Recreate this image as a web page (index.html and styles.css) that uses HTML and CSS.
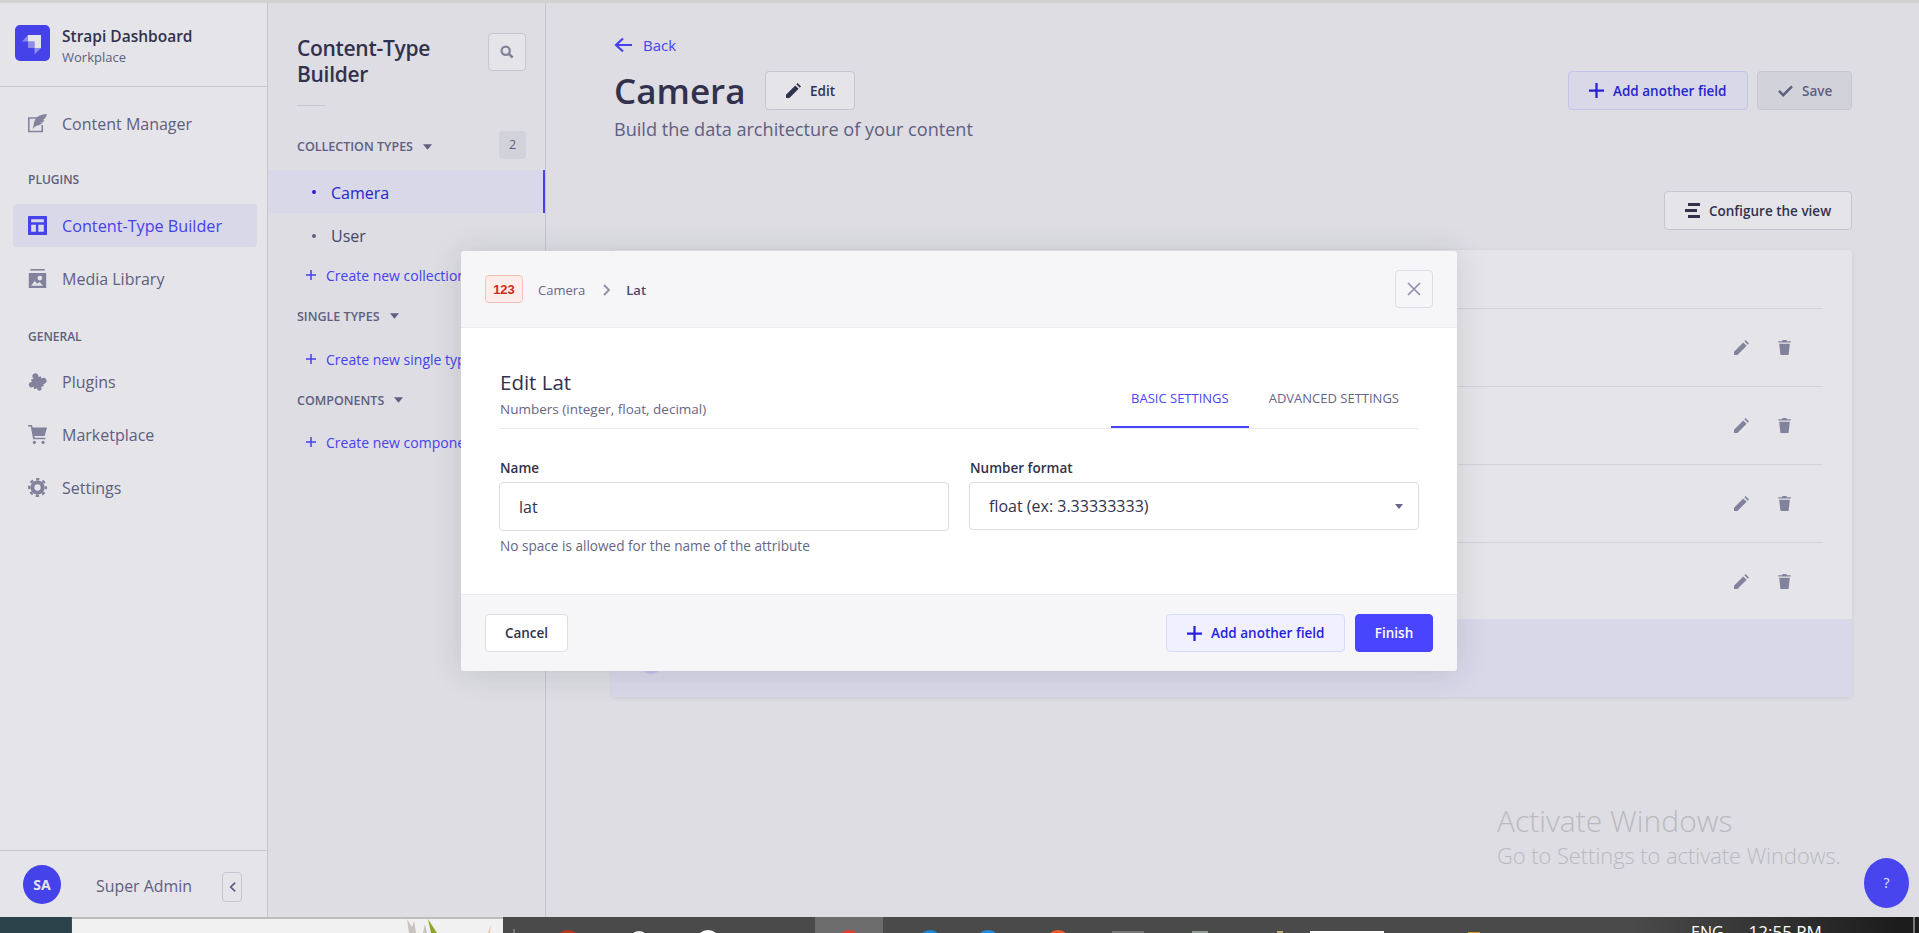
FILE: index.html
```html
<!DOCTYPE html>
<html lang="en">
<head>
    <meta charset="UTF-8">
    <title>Strapi Dashboard - Content-Type Builder</title>
    <link rel="stylesheet" href="styles.css">
</head>
<body>

<svg class="defs" width="0" height="0">
    <symbol id="i-pencil" viewBox="0 0 24 24"><path d="M0 24v-5.4L14.8 3.800l5.4 5.4L5.4 24zM16.600 2 18.600 0 24 5.400 22 7.400z"/></symbol>
    <symbol id="i-trash" viewBox="0 0 20 24"><path d="M7 0h6l1 2h6v2H0V2h6zM1.500 6h17L16.500 24h-13z"/></symbol>
    <symbol id="i-plus" viewBox="0 0 16 16"><path d="M6.800 0h2.400v6.800H16v2.400H9.200V16H6.800V9.200H0V6.800h6.800z"/></symbol>
    <symbol id="i-caret" viewBox="0 0 10 6"><path d="M0 0h10L5 6z"/></symbol>
</svg>

<div class="top-band"></div>

<div class="app">
    <aside class="sidebar">
        <div class="brand">
            <svg class="logo" viewBox="0 0 35 36">
                <rect width="35" height="36" rx="5" fill="#4945ff"/>
                <path d="M13 10h13v13h-6.500v-6.500H13z" fill="#fff"/>
                <path d="M13 16.500h6.500V23H13z" fill="#fff" opacity=".45"/>
                <path d="M13 10v6.500H7z M19.500 23H26l-6.500 6.500z" fill="#fff" opacity=".45"/>
            </svg>
            <div>
                <div class="brand-name">Strapi Dashboard</div>
                <div class="brand-sub">Workplace</div>
            </div>
        </div>
        <nav class="nav">
            <a class="nav-item">
                <svg class="nav-icon" viewBox="0 0 24 24"><path d="M0 4h12v2H2v15h15v-7h2v9H0z"/><path d="M24 0C15 .5 8.500 4 7.500 12L6 19c1.500-2 3-3.500 5.500-4.500 2.500 0 5-1 6.500-3h-3.500c2.500 0 5-1 6.500-3.500h-3.500C21 7 23 4 24 0z"/></svg>
                Content Manager
            </a>
            <div class="nav-label">PLUGINS</div>
            <a class="nav-item active">
                <svg class="nav-icon" viewBox="0 0 24 24"><path fill-rule="evenodd" d="M1 0h22a1 1 0 0 1 1 1v22a1 1 0 0 1-1 1H1a1 1 0 0 1-1-1V1a1 1 0 0 1 1-1zM4 4v4h16V4zM4 11v9h6v-9zM13 11v9h7v-9z"/></svg>
                Content-Type Builder
            </a>
            <a class="nav-item">
                <svg class="nav-icon" viewBox="0 0 24 24"><path d="M3 0h18v2H3z"/><path fill-rule="evenodd" d="M1 5h22v19H1zM15 8.500a3 3 0 1 0 0 6 3 3 0 0 0 0-6zM4 21h15l-4.500-4.500-3 2L8.500 15z"/></svg>
                Media Library
            </a>
            <div class="nav-label general">GENERAL</div>
            <a class="nav-item">
                <svg class="nav-icon" viewBox="0 0 24 24"><g transform="rotate(-18 12 12)"><rect x="5" y="7" width="13" height="13"/><circle cx="11.500" cy="5" r="3.800"/><circle cx="19.500" cy="13.500" r="3.800"/><circle cx="3.500" cy="13.500" r="3.300"/><circle cx="11.500" cy="21" r="2.800"/></g></svg>
                Plugins
            </a>
            <a class="nav-item">
                <svg class="nav-icon" viewBox="0 0 24 24"><path d="M0 0h5l1 3h18l-3 11H8l.5 2H22v2H6.500L3.500 2H0z"/><circle cx="8" cy="22" r="2"/><circle cx="19" cy="22" r="2"/></svg>
                Marketplace
            </a>
            <a class="nav-item">
                <svg class="nav-icon" viewBox="0 0 24 24"><circle cx="12" cy="12" r="6.500" fill="none" stroke="currentColor" stroke-width="5"/><circle cx="12" cy="12" r="10.500" fill="none" stroke="currentColor" stroke-width="3" stroke-dasharray="4.200 4.050" stroke-dashoffset="2.100"/></svg>
                Settings
            </a>
        </nav>
        <div class="user-bar">
            <div class="avatar">SA</div>
            <div class="user-name">Super Admin</div>
            <button class="collapse-btn">
                <svg viewBox="0 0 8 12" width="7" height="12"><path d="M7 1 2 6l5 5" fill="none" stroke="currentColor" stroke-width="2"/></svg>
            </button>
        </div>
    </aside>

    <section class="panel">
        <div class="panel-head">
            <h2 class="panel-title">Content-Type<br>Builder</h2>
            <button class="search-btn">
                <svg viewBox="0 0 16 16" width="14" height="14"><circle cx="6.500" cy="6.500" r="4.700" fill="none" stroke="currentColor" stroke-width="2.600"/><path d="m10 10 4.500 4.500" stroke="currentColor" stroke-width="3"/></svg>
            </button>
        </div>
        <div class="panel-rule"></div>

        <div class="group-head first">
            <span class="group-name">COLLECTION TYPES</span>
            <svg class="group-caret"><use href="#i-caret"/></svg>
            <span class="count">2</span>
        </div>
        <ul class="type-list">
            <li class="type-item current">Camera</li>
            <li class="type-item">User</li>
        </ul>
        <a class="create-link first"><svg><use href="#i-plus"/></svg>Create new collection type</a>

        <div class="group-head">
            <span class="group-name">SINGLE TYPES</span>
            <svg class="group-caret"><use href="#i-caret"/></svg>
        </div>
        <a class="create-link"><svg><use href="#i-plus"/></svg>Create new single type</a>

        <div class="group-head">
            <span class="group-name">COMPONENTS</span>
            <svg class="group-caret"><use href="#i-caret"/></svg>
        </div>
        <a class="create-link"><svg><use href="#i-plus"/></svg>Create new component</a>
    </section>

    <main class="main">
        <a class="back">
            <svg viewBox="0 0 19 16" width="19" height="16"><path d="M18 8H3M9 1.500 2 8l7 6.500" fill="none" stroke="currentColor" stroke-width="2.200"/></svg>
            Back
        </a>
        <div class="page-head">
            <h1 class="page-title">Camera</h1>
            <button class="btn edit-btn">
                <svg class="btn-icon"><use href="#i-pencil"/></svg>Edit
            </button>
            <div class="page-actions">
                <button class="btn btn-soft">
                    <svg class="btn-icon"><use href="#i-plus"/></svg>Add another field
                </button>
                <button class="btn btn-off">
                    <svg class="btn-icon" viewBox="0 0 16 12"><path d="M1 6.500 5.500 11 15 1.500" fill="none" stroke="currentColor" stroke-width="2.600"/></svg>Save
                </button>
            </div>
        </div>
        <p class="page-sub">Build the data architecture of your content</p>
        <div class="toolbar">
            <button class="btn">
                <svg class="btn-icon" viewBox="0 0 15 15"><path d="M3 0h12v3H3zM0 6h12v3H0zM3 12h12v3H3z"/></svg>Configure the view
            </button>
        </div>

        <div class="card">
            <div class="card-top"></div>
            <div class="row"><svg class="row-pencil"><use href="#i-pencil"/></svg><svg class="row-trash"><use href="#i-trash"/></svg></div>
            <div class="row"><svg class="row-pencil"><use href="#i-pencil"/></svg><svg class="row-trash"><use href="#i-trash"/></svg></div>
            <div class="row"><svg class="row-pencil"><use href="#i-pencil"/></svg><svg class="row-trash"><use href="#i-trash"/></svg></div>
            <div class="row"><svg class="row-pencil"><use href="#i-pencil"/></svg><svg class="row-trash"><use href="#i-trash"/></svg></div>
            <div class="card-foot"><span class="foot-dot"></span></div>
        </div>
    </main>

    <div class="overlay"></div>

    <div class="modal">
        <header class="modal-head">
            <span class="num-badge">123</span>
            <span class="crumb">Camera</span>
            <svg class="crumb-sep" viewBox="0 0 8 12"><path d="M1 1l5 5-5 5" fill="none" stroke="currentColor" stroke-width="1.800"/></svg>
            <span class="crumb-now">Lat</span>
            <button class="close-btn">
                <svg viewBox="0 0 14 14" width="14" height="14"><path d="M1 1l12 12M13 1 1 13" stroke="currentColor" stroke-width="1.600"/></svg>
            </button>
        </header>
        <div class="modal-body">
            <div class="modal-title-row">
                <div>
                    <h3 class="modal-title">Edit Lat</h3>
                    <div class="modal-sub">Numbers (integer, float, decimal)</div>
                </div>
                <div class="tabs">
                    <div class="tab selected">BASIC SETTINGS</div>
                    <div class="tab">ADVANCED SETTINGS</div>
                </div>
            </div>
            <div class="form-grid">
                <div>
                    <label class="field-label">Name</label>
                    <input class="field-input" type="text" value="lat">
                    <div class="field-help">No space is allowed for the name of the attribute</div>
                </div>
                <div>
                    <label class="field-label">Number format</label>
                    <div class="field-select">
                        float (ex: 3.33333333)
                        <svg class="select-caret"><use href="#i-caret"/></svg>
                    </div>
                </div>
            </div>
        </div>
        <footer class="modal-foot">
            <button class="btn btn-cancel">Cancel</button>
            <div class="foot-actions">
                <button class="btn btn-add">
                    <svg class="btn-icon"><use href="#i-plus"/></svg>Add another field
                </button>
                <button class="btn btn-finish">Finish</button>
            </div>
        </footer>
    </div>

    <div class="watermark">
        <div class="wm-title">Activate Windows</div>
        <div class="wm-sub">Go to Settings to activate Windows.</div>
    </div>
    <div class="help-bubble">?</div>
</div>

<div class="taskbar">
    <div class="tb-start"></div>
    <div class="tb-search">
        <svg class="tb-plant" viewBox="0 0 90 14" width="90" height="14">
            <path d="M2 14 0 0l5 8 2-6 2 12zM16 14l2-9 2 9z" fill="#c8c3bc"/>
            <path d="M24 14 21 0l9 14z" fill="#8fa32e"/>
            <path d="M81 14l3-8-1 8z" fill="#e2cd8c"/>
        </svg>
    </div>
    <i class="tb-sep"></i>
    <i class="tb-icon tb-brown"></i>
    <i class="tb-icon tb-pale"></i>
    <i class="tb-icon tb-white"></i>
    <div class="tb-active"><i class="tb-icon tb-red"></i></div>
    <i class="tb-icon tb-azure"></i>
    <i class="tb-icon tb-blue"></i>
    <i class="tb-icon tb-orange"></i>
    <i class="tb-box tb-gray"></i>
    <i class="tb-box tb-sage"></i>
    <i class="tb-box tb-tan"></i>
    <i class="tb-box tb-snow"></i>
    <i class="tb-box tb-gold"></i>
    <span class="tb-lang">ENG</span>
    <span class="tb-time">12:55 PM</span>
    <i class="tb-end"></i>
</div>

</body>
</html>
```

FILE: styles.css
```css
* {
    box-sizing: border-box;
}
html, body {
    margin: 0;
    height: 933px;
    overflow: hidden;
}
body {
    display: flex;
    flex-direction: column;
    font-family: "Open Sans", "Noto Sans", sans-serif;
    color: #32324d;
    background: #f6f6f9;
}
button {
    font-family: inherit;
}
ul, h1, h2, h3, p {
    margin: 0;
    padding: 0;
}
.defs {
    position: absolute;
}
.top-band {
    height: 3px;
    background: #d2d2d2;
}
.app {
    position: relative;
    display: flex;
    height: 914px;
}

/* left sidebar */
.sidebar {
    width: 268px;
    display: flex;
    flex-direction: column;
    background: #fff;
    border-right: 1px solid #dcdce4;
}
.brand {
    height: 84px;
    display: flex;
    gap: 12px;
    padding: 22px 0 0 15px;
    border-bottom: 1px solid #dcdce4;
}
.logo {
    width: 35px;
    height: 36px;
}
.brand-name {
    font-size: 15.500px;
    font-weight: 600;
    line-height: 22px;
}
.brand-sub {
    font-size: 13px;
    line-height: 20px;
    color: #666687;
}
.nav {
    padding-top: 15px;
}
.nav-item {
    height: 43px;
    margin: 0 10px 10px 13px;
    padding-left: 15px;
    display: flex;
    align-items: center;
    gap: 15px;
    border-radius: 4px;
    font-size: 16px;
    color: #666687;
}
.nav-icon {
    width: 19px;
    height: 19px;
    fill: #8e8ea9;
    color: #8e8ea9;
    flex: none;
}
.nav-item.active {
    background: #f0f0ff;
    color: #4945ff;
    font-size: 16.200px;
    font-weight: 500;
}
.nav-item.active .nav-icon {
    fill: #4945ff;
}
.nav-label {
    margin: 25px 0 14px 28px;
    height: 20px;
    line-height: 20px;
    font-size: 12px;
    font-weight: 600;
    color: #666687;
}
.nav-label.general {
    margin-top: 27px;
    margin-bottom: 13px;
}
.user-bar {
    margin-top: auto;
    height: 67px;
    display: flex;
    align-items: flex-start;
    border-top: 1px solid #dcdce4;
    padding: 14px 0 0 23px;
    color: #666687;
}
.avatar {
    width: 38px;
    height: 39px;
    border-radius: 50%;
    background: #4945ff;
    color: #fff;
    font-size: 14px;
    font-weight: 700;
    line-height: 39px;
    text-align: center;
}
.user-name {
    margin: 9px 0 0 35px;
    width: 126px;
    font-size: 15.900px;
    line-height: 24px;
}
.collapse-btn {
    width: 20px;
    height: 30px;
    margin-top: 7px;
    padding: 0;
    display: flex;
    align-items: center;
    justify-content: center;
    background: #fff;
    border: 1px solid #dcdce4;
    border-radius: 4px;
    color: #666687;
}

/* content type list */
.panel {
    width: 278px;
    background: #f6f6f9;
    border-right: 1px solid #dcdce4;
}
.panel-head {
    display: flex;
    justify-content: space-between;
    padding: 30px 19px 0 29px;
}
.panel-title {
    margin-top: 2px;
    font-size: 21px;
    font-weight: 600;
    letter-spacing: -0.3px;
    line-height: 26px;
}
.search-btn {
    width: 38px;
    height: 38px;
    padding: 0;
    display: flex;
    align-items: center;
    justify-content: center;
    background: #fff;
    border: 1px solid #dcdce4;
    border-radius: 4px;
    color: #8e8ea9;
}
.panel-rule {
    width: 28px;
    height: 1px;
    margin: 18px 0 0 29px;
    background: #dcdce4;
}
.group-head {
    height: 20px;
    margin-top: 21px;
    padding: 0 19px 0 29px;
    display: flex;
    align-items: center;
    font-size: 12.500px;
    font-weight: 600;
    color: #666687;
}
.group-head.first {
    height: 28px;
    margin-top: 25px;
}
.group-head.first .group-name,
.group-head.first .group-caret {
    margin-top: 3px;
}
.group-caret {
    width: 9px;
    height: 6px;
    margin-left: 10px;
    fill: #666687;
}
.count {
    margin-left: auto;
    width: 27px;
    height: 28px;
    line-height: 28px;
    text-align: center;
    border-radius: 4px;
    background: #eaeaef;
    font-weight: 500;
}
.type-list {
    list-style: none;
    margin-top: 11px;
}
.type-item {
    height: 43px;
    padding-left: 63px;
    position: relative;
    display: flex;
    align-items: center;
    font-size: 16px;
    color: #4a4a6a;
}
.type-item::before {
    content: "";
    position: absolute;
    left: 44px;
    top: 20px;
    width: 4px;
    height: 4px;
    border-radius: 50%;
    background: #666687;
}
.type-item + .type-item {
    margin-top: 1px;
}
.type-item.current {
    background: #f0f0ff;
    border-right: 2px solid #4945ff;
    padding-top: 2px;
    color: #271fe0;
    font-weight: 500;
}
.type-item.current::before {
    background: #271fe0;
}
.create-link {
    height: 20px;
    margin-top: 23px;
    padding-left: 38px;
    display: flex;
    align-items: center;
    gap: 10px;
    font-size: 14px;
    color: #4945ff;
    white-space: nowrap;
}
.create-link.first {
    margin-top: 8px;
}
.create-link:last-child {
    margin-top: 22px;
}
.create-link svg {
    width: 10px;
    height: 10px;
    fill: #4945ff;
    flex: none;
}

/* main column */
.main {
    flex: 1;
    min-width: 0;
    padding: 32px 67px 0 66px;
}
.back {
    height: 20px;
    display: flex;
    align-items: center;
    gap: 10px;
    padding-left: 2px;
    font-size: 15px;
    color: #4945ff;
}
.page-head {
    height: 39px;
    margin-top: 16px;
    display: flex;
    align-items: center;
}
.page-title {
    width: 132px;
    margin-left: 2px;
    font-size: 35px;
    font-weight: 600;
    line-height: 44px;
}
.btn {
    height: 39px;
    padding: 0 20px;
    display: inline-flex;
    align-items: center;
    gap: 9px;
    background: #fff;
    border: 1px solid #dcdce4;
    border-radius: 4px;
    font-size: 13.500px;
    font-weight: 600;
    color: #32324d;
    white-space: nowrap;
}
.btn-icon {
    width: 15px;
    height: 15px;
    fill: currentColor;
    flex: none;
}
.edit-btn {
    margin-left: 19px;
    width: 90px;
}
.page-actions {
    margin-left: auto;
    display: flex;
    gap: 9px;
}
.btn-soft {
    width: 180px;
    background: #f0f0ff;
    border-color: #d9d8ff;
    color: #271fe0;
}
.btn-off {
    background: #eaeaef;
    color: #666687;
    width: 95px;
}
.page-sub {
    margin: 7px 0 0 2px;
    font-size: 18.100px;
    line-height: 24px;
    color: #666687;
}
.toolbar {
    margin-top: 50px;
    display: flex;
    justify-content: flex-end;
}
.toolbar .btn {
    width: 188px;
}
.card {
    margin-top: 20px;
    background: #fff;
    border-radius: 4px;
    box-shadow: 0 1px 4px rgba(33, 33, 52, 0.1);
}
.card-top {
    height: 58px;
}
.row {
    height: 78px;
    margin: 0 29px;
    padding-right: 32px;
    display: flex;
    align-items: center;
    justify-content: flex-end;
    gap: 29px;
    border-top: 1px solid #eaeaef;
    fill: #8e8ea9;
}
.row:nth-child(5) {
    height: 77px;
}
.row-pencil {
    width: 15px;
    height: 15px;
}
.row-trash {
    width: 13px;
    height: 15px;
}
.card-foot {
    height: 78px;
    background: #f0f0ff;
    border-radius: 0 0 4px 4px;
    padding: 31px 0 0 27px;
}
.foot-dot {
    display: block;
    width: 24px;
    height: 24px;
    border-radius: 50%;
    background: #d9d8ff;
}

/* dim layer and dialog */
.overlay {
    position: absolute;
    inset: 0;
    background: rgba(50, 50, 77, 0.127);
}
.modal {
    position: absolute;
    left: 461px;
    top: 248px;
    width: 996px;
    height: 420px;
    display: flex;
    flex-direction: column;
    background: #fff;
    border-radius: 4px;
    box-shadow: 0 2px 32px rgba(33, 33, 52, 0.14);
    overflow: hidden;
}
.modal-head {
    height: 77px;
    flex: none;
    display: flex;
    align-items: center;
    padding: 0 24px;
    background: #f6f6f9;
    border-bottom: 1px solid #eaeaef;
}
.num-badge {
    width: 38px;
    height: 28px;
    line-height: 27px;
    text-align: center;
    background: #fcecea;
    border: 1px solid #f5c0b8;
    border-radius: 4px;
    font-family: "Liberation Sans", Arial, sans-serif;
    font-size: 13px;
    font-weight: 700;
    color: #d02b20;
}
.crumb {
    margin: 1px 0 0 15px;
    font-size: 13px;
    color: #666687;
}
.crumb-sep {
    width: 8px;
    height: 12px;
    margin: 1px 0 0 18px;
    color: #8e8ea9;
}
.crumb-now {
    margin: 1px 0 0 15px;
    font-size: 13px;
    font-weight: 600;
    color: #4a4a6a;
}
.close-btn {
    margin-left: auto;
    width: 38px;
    height: 38px;
    padding: 0;
    display: flex;
    align-items: center;
    justify-content: center;
    background: transparent;
    border: 1px solid #dcdce4;
    border-radius: 4px;
    color: #8e8ea9;
}
.modal-body {
    flex: 1;
    padding: 0 38px;
}
.modal-title-row {
    display: flex;
    justify-content: space-between;
    align-items: flex-end;
    height: 101px;
    padding-top: 40px;
    border-bottom: 1px solid #eaeaef;
}
.modal-title {
    font-size: 20.500px;
    font-weight: 500;
    line-height: 28px;
    margin-left: 1px;
}
.modal-sub {
    margin: 4px 0 10px 1px;
    font-size: 13.500px;
    line-height: 18px;
    color: #666687;
}
.tabs {
    display: flex;
}
.tab {
    padding: 0 20px 19px;
    border-bottom: 2px solid transparent;
    font-size: 13px;
    font-weight: 500;
    line-height: 18px;
    color: #666687;
}
.tab.selected {
    color: #4945ff;
    border-bottom-color: #4945ff;
}
.form-grid {
    display: grid;
    grid-template-columns: 450px 450px;
    gap: 20px;
    padding-top: 30px;
}
.field-label {
    display: block;
    margin-left: 1px;
    font-size: 13.500px;
    font-weight: 600;
    line-height: 18px;
    color: #32324d;
}
.field-input, .field-select {
    display: block;
    width: 100%;
    margin-top: 5px;
    padding: 0 19px;
    border: 1px solid #dcdce4;
    border-radius: 4px;
    background: #fff;
    font-family: inherit;
    font-size: 16px;
    color: #32324d;
}
.field-input {
    height: 49px;
}
.field-select {
    height: 48px;
    display: flex;
    align-items: center;
    justify-content: space-between;
}
.select-caret {
    width: 8px;
    height: 5px;
    margin-right: -4px;
    fill: #666687;
}
.field-help {
    margin: 6px 0 0 1px;
    font-size: 13.600px;
    line-height: 18px;
    color: #666687;
}
.modal-foot {
    height: 77px;
    flex: none;
    display: flex;
    align-items: center;
    justify-content: space-between;
    padding: 0 24px;
    background: #f6f6f9;
    border-top: 1px solid #eaeaef;
}
.modal-foot .btn {
    height: 38px;
}
.foot-actions {
    display: flex;
    gap: 10px;
}
.btn-cancel {
    width: 83px;
    justify-content: center;
    padding: 0;
}
.btn-add {
    width: 179px;
    background: #f0f0ff;
    border-color: #d9d8ff;
    color: #271fe0;
}
.btn-finish {
    width: 78px;
    justify-content: center;
    padding: 0;
    background: #4945ff;
    border-color: #4945ff;
    color: #fff;
}

/* desktop leftovers */
.watermark {
    position: absolute;
    left: 1497px;
    top: 798px;
    color: #bababe;
    white-space: nowrap;
}
.wm-title {
    font-size: 30px;
    font-weight: 300;
    line-height: 40px;
}
.wm-sub {
    margin-top: -1px;
    font-size: 21.800px;
    font-weight: 300;
    line-height: 32px;
}
.help-bubble {
    position: absolute;
    left: 1864px;
    top: 855px;
    width: 45px;
    height: 50px;
    border-radius: 50%;
    background: #4945ee;
    color: #e6e6ff;
    font-size: 14px;
    line-height: 50px;
    text-align: center;
}
.taskbar {
    height: 16px;
    display: flex;
    overflow: hidden;
    background: linear-gradient(90deg, #4a4a4a 85%, #1c1c1c 99%);
}
.tb-start {
    width: 71px;
    background: #2b424b;
}
.tb-search {
    width: 431px;
    margin-left: 1px;
    background: #f1f1f1;
    border-top: 2px solid #bdbdbd;
    padding-left: 335px;
}
.tb-plant {
    display: block;
}
.tb-sep {
    width: 2px;
    height: 6px;
    margin: 12px 0 0 10px;
    background: #777;
}
.tb-icon {
    flex: none;
    width: 24px;
    height: 24px;
    margin-top: 13px;
    border-radius: 50%;
}
.tb-brown { width: 26px; height: 26px; margin-left: 40px; background: #b5391f; }
.tb-pale { width: 18px; height: 18px; margin-left: 49px; margin-top: 14px; background: #f4f4f4; }
.tb-white { margin-left: 48px; background: #fff; }
.tb-active {
    width: 68px;
    margin-left: 95px;
    display: flex;
    justify-content: center;
    background: #6d6d6d;
}
.tb-red { background: #e23d2e; }
.tb-azure { margin-left: 35px; background: #1c8ad6; }
.tb-blue { margin-left: 34px; background: #1d8fe8; }
.tb-orange { margin-left: 46px; background: #f25c27; }
.tb-box {
    flex: none;
    height: 6px;
    margin-top: 14px;
}
.tb-gray { width: 32px; margin-left: 42px; background: #777; }
.tb-sage { width: 16px; margin-left: 48px; background: #8f9a90; }
.tb-tan { width: 6px; margin-left: 69px; background: #c9a878; }
.tb-snow { width: 74px; margin-left: 27px; background: #fff; }
.tb-gold { width: 12px; margin-left: 84px; margin-top: 15px; background: #d99a1e; }
.tb-lang, .tb-time {
    margin-top: 6px;
    font-size: 16px;
    line-height: 18px;
    color: #fff;
    white-space: nowrap;
}
.tb-lang { margin-left: 211px; }
.tb-time { margin-left: 25px; font-size: 17px; }
.tb-end {
    width: 2px;
    margin-left: auto;
    margin-right: 4px;
    background: #777;
}
```
